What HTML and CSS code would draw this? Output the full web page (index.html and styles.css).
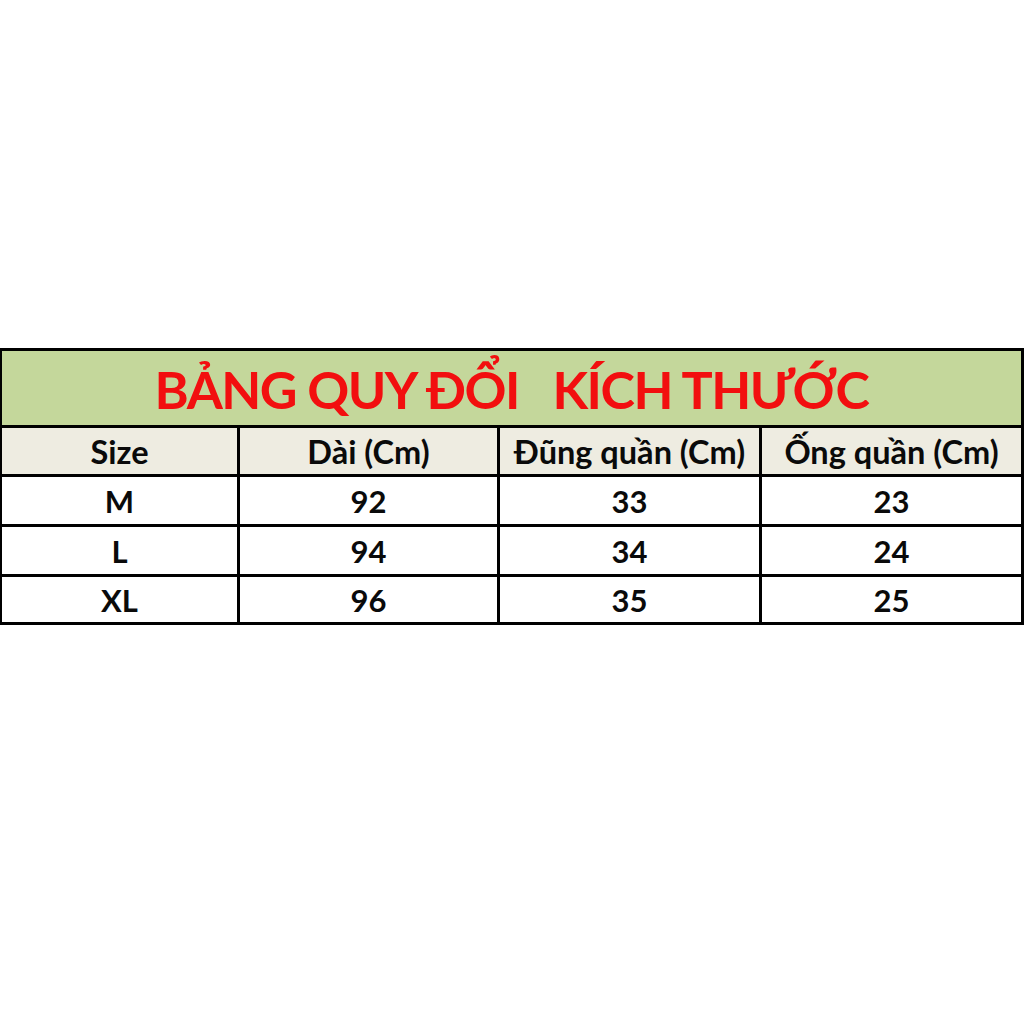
FILE: index.html
```html
<!DOCTYPE html>
<html lang="vi">
<head>
<meta charset="utf-8">
<title>Bảng quy đổi kích thước</title>
<link rel="stylesheet" href="styles.css">
</head>
<body>
<div class="page">
  <div class="table">
    <div class="cell title">BẢNG QUY ĐỔI   KÍCH THƯỚC</div>
    <div class="cell head">Size</div>
    <div class="cell head">Dài (Cm)</div>
    <div class="cell head">Đũng quần (Cm)</div>
    <div class="cell head">Ống quần (Cm)</div>
    <div class="cell">M</div>
    <div class="cell">92</div>
    <div class="cell">33</div>
    <div class="cell">23</div>
    <div class="cell">L</div>
    <div class="cell">94</div>
    <div class="cell">34</div>
    <div class="cell">24</div>
    <div class="cell">XL</div>
    <div class="cell">96</div>
    <div class="cell">35</div>
    <div class="cell">25</div>
  </div>
</div>
</body>
</html>
```
FILE: styles.css
```css
html, body {
  margin: 0;
  padding: 0;
  background: #ffffff;
}
.page {
  width: 1024px;
  height: 1024px;
  padding-top: 348px;
  box-sizing: border-box;
}
.table {
  display: grid;
  grid-template-columns: 235px 257px 259px 259px;
  grid-template-rows: 74px 46px 47px 47px 45px;
  column-gap: 3px;
  row-gap: 3px;
  padding: 3px 3px 3px 2px;
  background: #000000;
  font-family: Lato, "Open Sans", sans-serif;
  font-weight: 700;
  color: #0a0a0a;
}
.cell {
  background: #ffffff;
  display: flex;
  align-items: center;
  justify-content: center;
  font-size: 31px;
}
.title {
  grid-column: 1 / -1;
  background: #c4d79b;
  color: #f20f0f;
  font-size: 52px;
  letter-spacing: -1.5px;
  white-space: pre;
  padding-top: 2px;
}
.head {
  background: #eeece1;
  font-size: 32.5px;
}
```
